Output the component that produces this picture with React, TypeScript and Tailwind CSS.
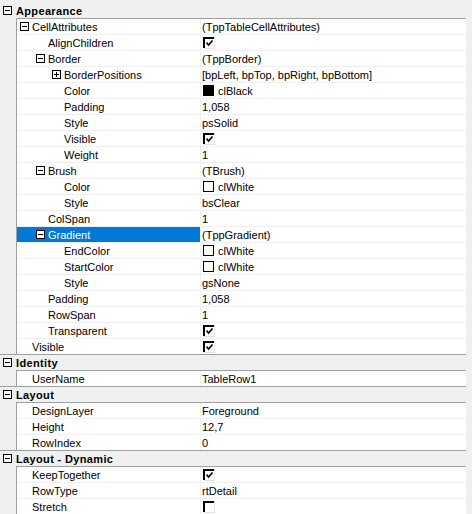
import clsx from "clsx";

type Value =
  | { kind: "text"; text: string }
  | { kind: "check"; checked: boolean }
  | { kind: "color"; color: "black" | "white"; text: string };

type Item =
  | { type: "header"; name: string }
  | {
      type: "row";
      level: 1 | 2 | 3;
      name: string;
      value: Value;
      expander?: "minus" | "plus";
      selected?: boolean;
      last?: boolean;
    };

const t = (text: string): Value => ({ kind: "text", text });
const chk = (checked = true): Value => ({ kind: "check", checked });

const items: Item[] = [
  { type: "header", name: "Appearance" },
  { type: "row", level: 1, name: "CellAttributes", expander: "minus", value: t("(TppTableCellAttributes)") },
  { type: "row", level: 2, name: "AlignChildren", value: chk() },
  { type: "row", level: 2, name: "Border", expander: "minus", value: t("(TppBorder)") },
  { type: "row", level: 3, name: "BorderPositions", expander: "plus", value: t("[bpLeft, bpTop, bpRight, bpBottom]") },
  { type: "row", level: 3, name: "Color", value: { kind: "color", color: "black", text: "clBlack" } },
  { type: "row", level: 3, name: "Padding", value: t("1,058") },
  { type: "row", level: 3, name: "Style", value: t("psSolid") },
  { type: "row", level: 3, name: "Visible", value: chk() },
  { type: "row", level: 3, name: "Weight", value: t("1") },
  { type: "row", level: 2, name: "Brush", expander: "minus", value: t("(TBrush)") },
  { type: "row", level: 3, name: "Color", value: { kind: "color", color: "white", text: "clWhite" } },
  { type: "row", level: 3, name: "Style", value: t("bsClear") },
  { type: "row", level: 2, name: "ColSpan", value: t("1") },
  { type: "row", level: 2, name: "Gradient", expander: "minus", selected: true, value: t("(TppGradient)") },
  { type: "row", level: 3, name: "EndColor", value: { kind: "color", color: "white", text: "clWhite" } },
  { type: "row", level: 3, name: "StartColor", value: { kind: "color", color: "white", text: "clWhite" } },
  { type: "row", level: 3, name: "Style", value: t("gsNone") },
  { type: "row", level: 2, name: "Padding", value: t("1,058") },
  { type: "row", level: 2, name: "RowSpan", value: t("1") },
  { type: "row", level: 2, name: "Transparent", value: chk() },
  { type: "row", level: 1, name: "Visible", value: chk(), last: true },
  { type: "header", name: "Identity" },
  { type: "row", level: 1, name: "UserName", value: t("TableRow1"), last: true },
  { type: "header", name: "Layout" },
  { type: "row", level: 1, name: "DesignLayer", value: t("Foreground") },
  { type: "row", level: 1, name: "Height", value: t("12,7") },
  { type: "row", level: 1, name: "RowIndex", value: t("0"), last: true },
  { type: "header", name: "Layout - Dynamic" },
  { type: "row", level: 1, name: "KeepTogether", value: chk() },
  { type: "row", level: 1, name: "RowType", value: t("rtDetail") },
  { type: "row", level: 1, name: "Stretch", value: chk(false) },
];

// left padding of the name cell (cell starts at x=17)
const textPad = { 1: "pl-[15px]", 2: "pl-[31px]", 3: "pl-[47px]" };
const boxPad = { 1: "pl-[3px]", 2: "pl-[19px]", 3: "pl-[35px]" };

function Expander({ kind }: { kind: "minus" | "plus" }) {
  return (
    <svg width="9" height="9" viewBox="0 0 9 9" className="mr-[3px] shrink-0">
      <rect x="0.5" y="0.5" width="8" height="8" fill="white" stroke="#000" />
      <rect x="2" y="4" width="5" height="1" fill="#000" />
      {kind === "plus" && <rect x="4" y="2" width="1" height="5" fill="#000" />}
    </svg>
  );
}

function CheckBox({ checked }: { checked: boolean }) {
  return (
    <svg width="12" height="12" viewBox="0 0 12 12" className="ml-[2px] shrink-0">
      <rect x="0" y="0" width="12" height="12" fill="white" />
      <rect x="11" y="1" width="1" height="11" fill="#e3e3e3" />
      <rect x="1" y="11" width="11" height="1" fill="#e3e3e3" />
      <rect x="0" y="0" width="11" height="2" fill="#000" />
      <rect x="0" y="0" width="2" height="11" fill="#000" />
      {checked && (
        <path d="M3.5 5.5 L5.5 8 L9.5 3.5" fill="none" stroke="#000" strokeWidth="1.7" />
      )}
    </svg>
  );
}

function ValueCell({ value }: { value: Value }) {
  if (value.kind === "check") return <CheckBox checked={value.checked} />;
  if (value.kind === "color")
    return (
      <>
        <span
          className={clsx(
            "ml-[2px] mr-[4px] h-[11px] w-[11px] shrink-0",
            value.color === "black" ? "bg-black" : "border border-black bg-white",
          )}
        />
        <span className="pt-[1px]">{value.text}</span>
      </>
    );
  return <span className="pl-[1px] pt-[1px]">{value.text}</span>;
}

function Header({ name }: { name: string }) {
  return (
    <div className="flex flex-col">
      <div className="flex h-[15px] items-center bg-[#f0f0f0]">
        <span className="flex w-[16px] justify-start pl-[3px]">
          <Expander kind="minus" />
        </span>
        <span className="pt-[1px] font-bold tracking-[0.35px]">{name}</span>
      </div>
      <div className="ml-[16px] h-px bg-[#a0a0a0]" />
    </div>
  );
}

export default function App() {
  return (
    <div className="h-[514px] w-[472px] overflow-hidden bg-[#f0f0f0] pt-[3px] font-['Liberation_Sans',Arial,sans-serif] text-[11px] leading-[15px] text-black">
      <div className="w-[466px]">
        {items.map((item, i) =>
          item.type === "header" ? (
            <Header key={i} name={item.name} />
          ) : (
            <div
              key={i}
              className={clsx("flex h-[16px]", item.last && "border-b border-[#a0a0a0]")}
            >
              <div className="h-full w-[17px] shrink-0 border-r border-[#a0a0a0] bg-[#f0f0f0]" />
              <div className={clsx("flex h-full flex-1", !item.last && "border-b border-[#f0f0f0]")}>
                <div
                  className={clsx(
                    "flex w-[183px] shrink-0 items-center",
                    item.expander ? boxPad[item.level] : textPad[item.level],
                    item.selected ? "bg-[#0078d7] text-white" : "bg-white",
                  )}
                >
                  {item.expander && <Expander kind={item.expander} />}
                  <span className="pt-[1px]">{item.name}</span>
                </div>
                <div className="flex flex-1 items-center border-l border-[#f0f0f0] bg-white">
                  <ValueCell value={item.value} />
                </div>
              </div>
            </div>
          ),
        )}
      </div>
    </div>
  );
}
